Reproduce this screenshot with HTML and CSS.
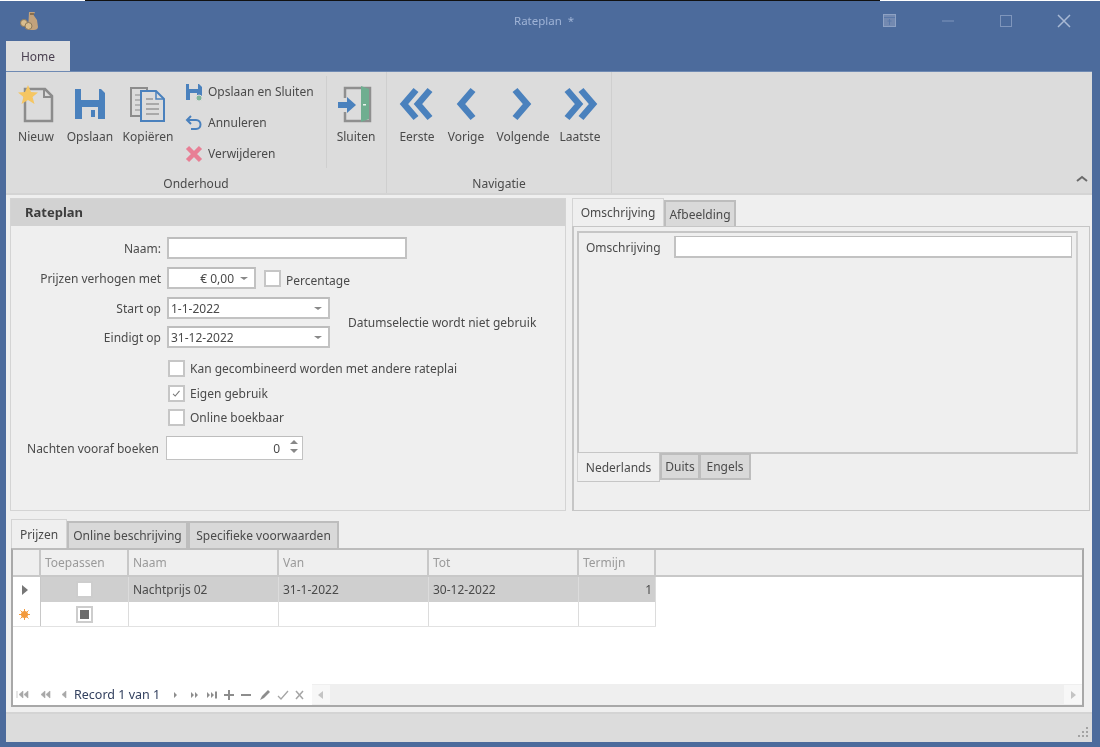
FILE: index.html
```html
<!DOCTYPE html>
<html lang="nl">
<head>
<meta charset="utf-8">
<title>Rateplan</title>
<link rel="stylesheet" href="styles.css">
</head>
<body>
<div class="window">
  <div class="topline"><span class="topline-black"></span></div>
  <header class="titlebar">
    <svg class="app-icon" width="20" height="20" viewBox="0 0 20 20"><path d="M10 1h6l-1.500 3 3.500 5 1 7c0 2-2 3-4 3H9z" fill="#c2a27c"/><path d="M11 2h4v2h-4z" fill="#8a6f4f"/><circle cx="5" cy="12" r="3.500" fill="#d8bd8e" stroke="#8d7a5c"/><circle cx="9.500" cy="15" r="3.500" fill="#d8bd8e" stroke="#8d7a5c"/></svg>
    <div class="title">Rateplan&nbsp; *</div>
    <div class="winctrl">
      <svg class="wc wc-pin" width="14" height="14" viewBox="0 0 14 14"><rect x=".5" y=".5" width="12" height="12" fill="#7389b0" stroke="#8ea2c4"/><path d="M1 3.500h11M6.500 5v6M4.500 7h4" stroke="#5a78a8" fill="none"/></svg>
      <svg class="wc wc-min" width="14" height="14" viewBox="0 0 14 14"><path d="M1 7h12" stroke="#7f96bc" stroke-width="1"/></svg>
      <svg class="wc wc-max" width="14" height="14" viewBox="0 0 14 14"><rect x="1.500" y="1.500" width="11" height="11" fill="none" stroke="#7f96bc" stroke-width="1"/></svg>
      <svg class="wc wc-close" width="14" height="14" viewBox="0 0 14 14"><path d="M1 1l12 12M13 1L1 13" stroke="#a9b9d4" stroke-width="1.500"/></svg>
    </div>
  </header>
  <div class="ribbon-tabs"><div class="ribbon-tab">Home</div></div>
  <section class="ribbon">
    <div class="rgroup rgroup-main">
      <div class="rgroup-body">
        <div class="rbtn rbtn-nieuw">
          <svg width="38" height="38" viewBox="0 0 38 38"><path d="M8 4h20l7 7v25H8z" fill="none" stroke="#8c8c8c" stroke-width="2.500"/><path d="M27 4v8h8" fill="none" stroke="#8c8c8c" stroke-width="2"/><path d="M11 0l3 7 7 .5-5.500 4.500 2 7-6.500-4-6.500 4 2-7L1 7.500 8 7z" fill="#f5c662"/></svg>
          <span>Nieuw</span>
        </div>
        <div class="rbtn rbtn-opslaan">
          <svg width="38" height="38" viewBox="0 0 38 38"><path d="M4 4h26l4 4v26H4z" fill="#4a81bd"/><rect x="10" y="4" width="18" height="11" fill="#dcdcdc"/><rect x="11" y="22" width="16" height="12" fill="#dcdcdc"/><rect x="20" y="25" width="4" height="7" fill="#4a81bd"/></svg>
          <span>Opslaan</span>
        </div>
        <div class="rbtn rbtn-kopieren">
          <svg width="38" height="38" viewBox="0 0 38 38"><path d="M2 3h16v28H2z" fill="none" stroke="#8c8c8c" stroke-width="2"/><path d="M6 10h8M6 15h8M6 20h8M6 25h8" stroke="#8c8c8c"/><path d="M12 6h15l8 8v22H12z" fill="#dcdcdc" stroke="#4a81bd" stroke-width="2"/><path d="M27 6v8h8" fill="none" stroke="#4a81bd" stroke-width="1.500"/><path d="M17 14h7M17 19h13M17 24h13M17 29h13" stroke="#777"/></svg>
          <span>Kopiëren</span>
        </div>
        <div class="rsmall">
          <div class="rsmall-item">
            <svg width="18" height="18" viewBox="0 0 18 18"><path d="M1 1h13l3 3v13H1z" fill="#4a81bd"/><rect x="4" y="1" width="9" height="5" fill="#dcdcdc"/><rect x="5" y="10" width="7" height="7" fill="#dcdcdc"/><circle cx="14" cy="15" r="3" fill="#7fb69a" stroke="#dcdcdc"/></svg>
            <span>Opslaan en Sluiten</span>
          </div>
          <div class="rsmall-item">
            <svg width="18" height="18" viewBox="0 0 18 18"><path d="M6 2L2 6l4 4" fill="none" stroke="#4a81bd" stroke-width="2"/><path d="M3 6h8c6 0 6 9 0 9H6" fill="none" stroke="#4a81bd" stroke-width="2"/></svg>
            <span>Annuleren</span>
          </div>
          <div class="rsmall-item">
            <svg width="18" height="18" viewBox="0 0 18 18"><path d="M2.500 2.500l13 13M15.500 2.500l-13 13" stroke="#e87f95" stroke-width="4.500"/></svg>
            <span>Verwijderen</span>
          </div>
        </div>
        <div class="rsep"></div>
        <div class="rbtn rbtn-sluiten">
          <svg width="38" height="38" viewBox="0 0 38 38"><path d="M8 13V3h25v33H8v-9" fill="none" stroke="#8f8f8f" stroke-width="2.500"/><path d="M24 1l8 3v30l-8 3z" fill="#6fae90"/><rect x="26" y="19" width="3" height="1.500" fill="#e8f2ec"/><path d="M1 17h9v-5l9 8-9 8v-5H1z" fill="#4a81bd"/></svg>
          <span>Sluiten</span>
        </div>
      </div>
      <div class="rgroup-label">Onderhoud</div>
    </div>
    <div class="rgroup rgroup-nav">
      <div class="rgroup-body">
        <div class="rbtn rbtn-first">
          <svg width="38" height="38" viewBox="0 0 38 38"><path d="M18 5L6 19l12 14M32 5L20 19l12 14" fill="none" stroke="#4a81bd" stroke-width="6.500"/></svg>
          <span>Eerste</span>
        </div>
        <div class="rbtn rbtn-prev">
          <svg width="38" height="38" viewBox="0 0 38 38"><path d="M26 5L14 19l12 14" fill="none" stroke="#4a81bd" stroke-width="6.500"/></svg>
          <span>Vorige</span>
        </div>
        <div class="rbtn rbtn-next">
          <svg width="38" height="38" viewBox="0 0 38 38"><path d="M11 5l12 14-12 14" fill="none" stroke="#4a81bd" stroke-width="6.500"/></svg>
          <span>Volgende</span>
        </div>
        <div class="rbtn rbtn-last">
          <svg width="38" height="38" viewBox="0 0 38 38"><path d="M6 5l12 14L6 33M20 5l12 14-12 14" fill="none" stroke="#4a81bd" stroke-width="6.500"/></svg>
          <span>Laatste</span>
        </div>
      </div>
      <div class="rgroup-label">Navigatie</div>
    </div>
    <svg class="ribbon-collapse" width="12" height="8" viewBox="0 0 12 8"><path d="M1 6l5-4 5 4" fill="none" stroke="#6a6a6a" stroke-width="2"/></svg>
  </section>

  <main class="content">
    <div class="top-panels">
      <section class="panel-left">
        <h2 class="panel-head">Rateplan</h2>
        <div class="form">
          <div class="row row-naam">
            <label class="lbl">Naam:</label>
            <div class="input input-naam"></div>
          </div>
          <div class="row row-prijs">
            <label class="lbl">Prijzen verhogen met</label>
            <div class="input input-prijs"><span class="val-right">€ 0,00</span><i class="caret"></i></div>
            <span class="check check-pct"></span>
            <span class="pct-text">Percentage</span>
          </div>
          <div class="dates">
            <div class="dates-col">
              <div class="row row-start">
                <label class="lbl">Start op</label>
                <div class="input input-date"><span>1-1-2022</span><i class="caret"></i></div>
              </div>
              <div class="row row-eind">
                <label class="lbl">Eindigt op</label>
                <div class="input input-date"><span>31-12-2022</span><i class="caret"></i></div>
              </div>
            </div>
            <div class="dates-note">Datumselectie wordt niet gebruik</div>
          </div>
          <div class="checkrow checkrow-1"><span class="check"></span><span class="check-text">Kan gecombineerd worden met andere rateplai</span></div>
          <div class="checkrow checkrow-2">
            <span class="check"><svg width="15" height="15" viewBox="0 0 15 15"><path d="M3.500 8l2.500 2.500 5-6" fill="none" stroke="#777" stroke-width="1.200"/></svg></span>
            <span class="check-text">Eigen gebruik</span>
          </div>
          <div class="checkrow checkrow-3"><span class="check"></span><span class="check-text">Online boekbaar</span></div>
          <div class="row row-nacht">
            <label class="lbl lbl-nacht">Nachten vooraf boeken</label>
            <div class="input input-nacht"><span class="val-right">0</span>
              <span class="spin"><i class="spin-up"></i><i class="spin-down"></i></span>
            </div>
          </div>
        </div>
      </section>

      <section class="panel-right">
        <div class="tabs tabs-right">
          <div class="tab tab-active tab-omschr">Omschrijving</div>
          <div class="tab tab-afb">Afbeelding</div>
        </div>
        <div class="page-right">
          <div class="page-inner">
            <div class="omschr-row">
              <span class="omschr-lbl">Omschrijving</span>
              <div class="input input-omschr"></div>
            </div>
          </div>
          <div class="tabs tabs-lang">
            <div class="tab tab-active tab-nl">Nederlands</div>
            <div class="tab tab-de">Duits</div>
            <div class="tab tab-en">Engels</div>
          </div>
        </div>
      </section>
    </div>

    <section class="panel-bottom">
      <div class="tabs tabs-bottom">
        <div class="tab tab-active tab-prijzen">Prijzen</div>
        <div class="tab tab-online">Online beschrijving</div>
        <div class="tab tab-spec">Specifieke voorwaarden</div>
      </div>
      <div class="gridbox">
        <div class="grid grid-head">
          <div class="cell cell-ind"></div>
          <div class="cell">Toepassen</div>
          <div class="cell">Naam</div>
          <div class="cell">Van</div>
          <div class="cell">Tot</div>
          <div class="cell">Termijn</div>
          <div class="cell cell-fill"></div>
        </div>
        <div class="grid grid-row grid-row-sel">
          <div class="cell cell-ind"><svg width="7" height="10" viewBox="0 0 7 10"><path d="M1 0l6 5-6 5z" fill="#777"/></svg></div>
          <div class="cell cell-center"><span class="check check-grid"></span></div>
          <div class="cell">Nachtprijs 02</div>
          <div class="cell">31-1-2022</div>
          <div class="cell">30-12-2022</div>
          <div class="cell cell-right">1</div>
        </div>
        <div class="grid grid-row">
          <div class="cell cell-ind"><svg width="11" height="11" viewBox="0 0 11 11"><circle cx="5.500" cy="5.500" r="3.500" fill="#f39a3c"/><path d="M5.500 0v11M0 5.500h11M1.500 1.500l8 8M9.500 1.500l-8 8" stroke="#f39a3c"/></svg></div>
          <div class="cell cell-center"><span class="check check-grid"><i class="check-indet"></i></span></div>
          <div class="cell"></div>
          <div class="cell"></div>
          <div class="cell"></div>
          <div class="cell"></div>
        </div>
        <div class="grid-space"></div>
        <div class="navigator">
          <svg class="nav-icons" width="52" height="10" viewBox="0 0 52 10"><path d="M1 1v7M7 1L3 4.500 7 8zM12 1L8 4.500 12 8zM29 1l-4 3.500L29 8zM34 1l-4 3.500L34 8zM50 1l-4 3.500L50 8z" fill="#a8a8a8" stroke="#a8a8a8" stroke-width=".6"/></svg>
          <span class="nav-text">Record 1 van 1</span>
          <svg class="nav-icons2" width="144" height="14" viewBox="0 0 144 14"><path d="M4 4l3 3-3 3zM21 4l3 3-3 3zM25 4l3 3-3 3zM37 4l3 3-3 3zM41 4l3 3-3 3z" fill="#8d8d8d"/><path d="M46 3.500v7M54 7h10M59 2v10M71 7h10" stroke="#8d8d8d" stroke-width="2"/><path d="M90 12l2-4 6-6 2 2-6 6z" fill="#8d8d8d"/><path d="M108 8l3 3 7-8" fill="none" stroke="#a5a5a5" stroke-width="1.300"/><path d="M126 3l7 8M133 3l-7 8" stroke="#a5a5a5" stroke-width="1.500"/></svg>
          <div class="hscroll">
            <span class="hs-btn"><svg width="6" height="8" viewBox="0 0 6 8"><path d="M5 0L0 4l5 4z" fill="#c4c4c4"/></svg></span>
            <span class="hs-btn"><svg width="6" height="8" viewBox="0 0 6 8"><path d="M1 0l5 4-5 4z" fill="#c4c4c4"/></svg></span>
          </div>
        </div>
      </div>
    </section>
  </main>

  <footer class="statusbar">
    <svg width="14" height="14" viewBox="0 0 14 14"><path d="M10 2h2v2h-2zM6 6h2v2H6zM10 6h2v2h-2zM2 10h2v2H2zM6 10h2v2H6zM10 10h2v2h-2z" fill="#a3a3a3"/></svg>
  </footer>
</div>
</body>
</html>
```

FILE: styles.css
```css
* { box-sizing: border-box; }
html, body { margin: 0; padding: 0; }
body {
  width: 1100px;
  height: 747px;
  overflow: hidden;
  font-family: "Noto Sans", sans-serif;
  font-size: 12px;
  color: #4a4a4a;
}
.window {
  width: 1100px;
  height: 747px;
  display: flex;
  flex-direction: column;
  background: #4c6b9c;
  filter: blur(0.5px);
}
.topline { height: 1px; background: #fff; flex: none; }
.topline-black { display: block; width: 795px; height: 1px; margin-left: 85px; background: #111; }

.titlebar { height: 40px; flex: none; display: flex; align-items: center; position: relative; padding: 0 0 0 19px; }
.app-icon { flex: none; margin-top: -1px; }
.title { position: absolute; left: 514px; top: 12px; color: #9fb3d6; font-size: 11.5px; }
.winctrl { margin-left: auto; display: flex; margin-top: -1px; width: 218px; padding-left: 1px; }
.wc { flex: none; }
.wc-min { margin-left: 44px; }
.wc-max { margin-left: 44px; }
.wc-close { margin-left: 44px; }

.ribbon-tabs { height: 30px; flex: none; padding-left: 6px; display: flex; }
.ribbon-tab { width: 64px; background: #dfdfdf; color: #4a4050; display: flex; align-items: center; justify-content: center; height: 31px; }

.ribbon { height: 124px; flex: none; margin: 0 8px 0 6px; background: #dcdcdc; display: flex; border-bottom: 2px solid #d4d4d4; border-top: 1px solid #6f8ab3; position: relative; }
.rgroup { display: flex; flex-direction: column; border-right: 1px solid #cfcfcf; }
.rgroup-main { width: 381px; padding-left: 4px; }
.rgroup-nav { width: 225px; padding-left: 5px; }
.rgroup-body { display: flex; height: 100px; padding-top: 13px; flex: none; }
.rgroup-label { text-align: center; height: 20px; line-height: 20px; margin-top: 2px; flex: none; }
.rgroup-main .rgroup-label { padding-right: 4px; }
.rgroup-nav .rgroup-label { padding-right: 5px; }
.rbtn { display: flex; flex-direction: column; align-items: center; flex: none; }
.rbtn svg { flex: none; height: 38px; }
.rbtn span { margin-top: 5px; white-space: nowrap; }
.rbtn-nieuw { width: 52px; }
.rbtn-opslaan { width: 56px; }
.rbtn-kopieren { width: 60px; }
.rbtn-sluiten { width: 58px; }
.rbtn-first { width: 50px; }
.rbtn-prev { width: 48px; }
.rbtn-next { width: 66px; }
.rbtn-last { width: 48px; }
.rsmall { width: 148px; padding-left: 7px; display: flex; flex-direction: column; margin-top: -9px; }
.rsmall-item { display: flex; align-items: center; height: 31px; gap: 5px; white-space: nowrap; flex: none; }
.rsep { width: 1px; height: 92px; background: #cfcfcf; margin-top: -9px; flex: none; }
.ribbon-collapse { position: absolute; right: 4px; bottom: 10px; }

.content { flex: 1; min-height: 0; margin: 0 8px 0 6px; background: #efefef; padding: 3px 0 0 4px; display: flex; flex-direction: column; }
.top-panels { display: flex; height: 313px; flex: none; }
.panel-left { width: 556px; height: 313px; border: 1px solid #d4d4d4; flex: none; }
.panel-head { margin: 0; height: 27px; line-height: 26px; padding-left: 14px; font-size: 13px; font-weight: bold; background: #d2d2d2; color: #3d3d3d; }
.form { display: flex; flex-direction: column; }
.row { display: flex; align-items: center; }
.lbl { width: 150px; text-align: right; margin-right: 6px; flex: none; white-space: nowrap; }
.input { background: #fff; border: 2px solid #c2c2c2; border-top-color: #bdbdbd; height: 22px; display: flex; align-items: center; position: relative; flex: none; color: #4a4a4a; }
.row-naam { margin-top: 11px; }
.row-prijs { margin-top: 8px; }
.input-naam { width: 240px; }
.input-prijs { width: 89px; }
.val-right { margin-left: auto; }
.input-prijs .val-right { margin-right: 20px; }
.caret { position: absolute; right: 6px; top: 8px; border: 4px solid transparent; border-top: 3px solid #888; border-bottom: 0; width: 0; height: 0; }
.check { width: 17px; height: 17px; border: 2px solid #c6c6c6; background: #fff; display: inline-flex; align-items: center; justify-content: center; flex: none; }
.check-pct { margin-left: 8px; }
.pct-text { margin-left: 5px; margin-top: 4px; }
.dates { display: flex; margin-top: 8px; }
.dates-col { display: flex; flex-direction: column; gap: 7px; }
.input-date { width: 163px; padding-left: 2px; }
.dates-note { margin-left: 18px; margin-top: 17px; white-space: nowrap; }
.checkrow { display: flex; align-items: center; margin-left: 157px; height: 17px; }
.checkrow-1 { margin-top: 12px; }
.checkrow-2 { margin-top: 8px; }
.checkrow-3 { margin-top: 7px; }
.check-text { margin-left: 5px; white-space: nowrap; }
.row-nacht { margin-top: 10px; }
.lbl-nacht { width: 148px; margin-right: 7px; }
.input-nacht { width: 137px; height: 24px; padding-right: 22px; border-width: 1px; }
.spin { position: absolute; right: 4px; top: 3px; display: flex; flex-direction: column; gap: 5px; }
.spin-up { border: 4px solid transparent; border-bottom: 4px solid #888; border-top: 0; width: 0; height: 0; }
.spin-down { border: 4px solid transparent; border-top: 4px solid #888; border-bottom: 0; width: 0; height: 0; }

.panel-right { width: 518px; margin-left: 6px; flex: none; display: flex; flex-direction: column; }
.tabs { display: flex; flex: none; }
.tab { background: #d9d9d9; border: 2px solid #bdbdbd; border-bottom: 0; display: flex; align-items: center; justify-content: center; white-space: nowrap; flex: none; }
.tab-active { background: #efefef; border: 1px solid #d4d4d4; border-bottom: 0; }
.tabs-right { height: 28px; align-items: flex-end; }
.tab-omschr { width: 92px; height: 28px; }
.tab-afb { width: 72px; height: 26px; }
.page-right { flex: 1; border: 2px solid #c6c6c6; border-top-width: 1px; border-right-width: 1px; border-bottom-width: 1px; padding: 4px 11px 0 3px; display: flex; flex-direction: column; }
.page-inner { height: 223px; border: 2px solid #c6c6c6; border-right-color: #cfcfcf; padding: 3px 4px 0 7px; }
.omschr-row { display: flex; align-items: center; justify-content: space-between; }
.omschr-lbl { white-space: nowrap; }
.input-omschr { width: 398px; border-top-width: 1px; border-right-width: 1px; }
.tabs-lang { align-items: flex-start; margin-top: -1px; }
.tab-nl { width: 83px; height: 29px; border-top: 0; border-right-color: #c6c6c6; border-bottom: 1px solid #c6c6c6; }
.tab-de { width: 40px; height: 27px; border-bottom: 2px solid #bdbdbd; }
.tab-en { width: 51px; height: 27px; border-left-width: 1px; border-bottom: 2px solid #bdbdbd; }

.panel-bottom { margin-top: 8px; margin-left: 1px; width: 1073px; flex: none; display: flex; flex-direction: column; }
.tabs-bottom { height: 29px; align-items: flex-end; }
.tab-prijzen { width: 56px; height: 29px; }
.tab-online { width: 121px; height: 27px; }
.tab-spec { width: 151px; height: 27px; }
.gridbox { height: 159px; border: 2px solid #a8a8a8; border-top-color: #bcbcbc; background: #fff; display: flex; flex-direction: column; }
.grid { display: grid; grid-template-columns: 28px 88px 150px 150px 150px 77px; flex: none; width: max-content; }
.grid-head { grid-template-columns: 28px 88px 150px 150px 150px 77px 426px; height: 27px; background: #efefef; color: #9a9a9a; border-bottom: 2px solid #c8c8c8; }
.cell { display: flex; align-items: center; padding-left: 4px; border-right: 1px solid #dcdcdc; white-space: nowrap; min-width: 0; }
.grid-head .cell { border-right: 2px solid #c8c8c8; }
.grid-head .cell-fill { border-right: 0; }
.grid-row { height: 25px; border-bottom: 1px solid #e2e2e2; }
.grid-row-sel { background: #cfcfcf; border-bottom: 0; }
.cell-ind { background: #fff; justify-content: center; padding: 0 4px 0 0; border-right: 1px solid #c8c8c8; }
.grid-head .cell-ind { background: #efefef; }
.cell-center { justify-content: center; padding: 0; }
.cell-right { justify-content: flex-end; padding-right: 3px; }
.check-grid { border-color: #cdcdcd; }
.check-indet { width: 9px; height: 9px; background: #6b6b6b; display: block; }
.grid-space { flex: 1; min-height: 0; }
.navigator { height: 21px; flex: none; display: flex; align-items: center; background: #fff; }
.nav-icons { margin-left: 3px; flex: none; }
.nav-text { margin-left: 6px; color: #33415f; white-space: nowrap; width: 97px; font-size: 12.5px; }
.nav-icons2 { flex: none; margin-left: -1px; }
.hscroll { flex: 1; height: 21px; background: #efefef; margin-left: -2px; display: flex; justify-content: space-between; }
.hs-btn { width: 18px; height: 19px; margin: 1px 0; background: #f7f7f7; display: flex; align-items: center; justify-content: center; }
.statusbar { height: 30px; flex: none; margin: 0 8px 5px 6px; background: #dcdcdc; border-top: 2px solid #d4d4d4; display: flex; align-items: center; justify-content: flex-end; padding: 8px 2px 0 0; }
```
